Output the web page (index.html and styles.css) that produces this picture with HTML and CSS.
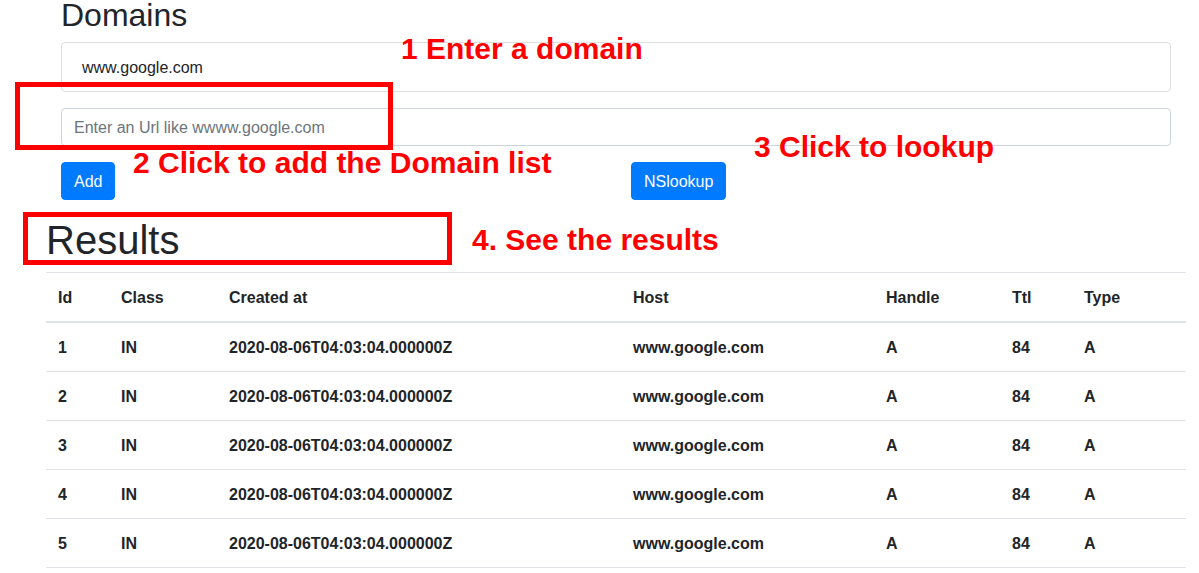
FILE: index.html
```html
<!DOCTYPE html>
<html lang="en">
<head>
<meta charset="utf-8">
<title>Domains</title>
<link rel="stylesheet" href="styles.css">
</head>
<body>
<div class="page">
  <section class="domains">
    <h2 class="domains-title">Domains</h2>
    <ul class="list-group">
      <li class="list-item">www.google.com</li>
    </ul>
    <div class="form-group">
      <input class="form-control" type="text" placeholder="Enter an Url like wwww.google.com">
    </div>
    <div class="actions">
      <div class="action-col"><button class="btn">Add</button></div>
      <div class="action-col"><button class="btn">NSlookup</button></div>
    </div>
  </section>
  <h1 class="results-title">Results</h1>
  <table class="results">
    <colgroup>
      <col class="c-id"><col class="c-class"><col class="c-created"><col class="c-host"><col class="c-handle"><col class="c-ttl"><col class="c-type">
    </colgroup>
    <thead>
      <tr><th>Id</th><th>Class</th><th>Created at</th><th>Host</th><th>Handle</th><th>Ttl</th><th>Type</th></tr>
    </thead>
    <tbody>
      <tr><td>1</td><td>IN</td><td>2020-08-06T04:03:04.000000Z</td><td>www.google.com</td><td>A</td><td>84</td><td>A</td></tr>
      <tr><td>2</td><td>IN</td><td>2020-08-06T04:03:04.000000Z</td><td>www.google.com</td><td>A</td><td>84</td><td>A</td></tr>
      <tr><td>3</td><td>IN</td><td>2020-08-06T04:03:04.000000Z</td><td>www.google.com</td><td>A</td><td>84</td><td>A</td></tr>
      <tr><td>4</td><td>IN</td><td>2020-08-06T04:03:04.000000Z</td><td>www.google.com</td><td>A</td><td>84</td><td>A</td></tr>
      <tr><td>5</td><td>IN</td><td>2020-08-06T04:03:04.000000Z</td><td>www.google.com</td><td>A</td><td>84</td><td>A</td></tr>
    </tbody>
  </table>
</div>

<div class="mark mark-input"></div>
<div class="mark mark-results"></div>
<div class="note note-1">1 Enter a domain</div>
<div class="note note-2">2 Click to add the Domain list</div>
<div class="note note-3">3 Click to lookup</div>
<div class="note note-4">4. See the results</div>
</body>
</html>
```
FILE: styles.css
```css
* { box-sizing: border-box; }

html, body {
  margin: 0;
  padding: 0;
  background: #fff;
}

body {
  font-family: "Liberation Sans", Arial, sans-serif;
  font-size: 16px;
  line-height: 1.5;
  color: #212529;
  overflow: hidden;
}

.page {
  width: 1140px;
  margin-left: 46px;
}

.domains {
  padding: 0 15px;
}

.domains-title {
  margin: -4px 0 8px;
  font-size: 32px;
  font-weight: 400;
  line-height: 1.2;
}

.list-group {
  list-style: none;
  margin: 0 0 16px;
  padding: 0;
}

.list-item {
  padding: 13px 20px 11px;
  border: 1px solid rgba(0, 0, 0, 0.125);
  border-radius: 4px;
  line-height: 24px;
}

.form-group {
  margin-bottom: 16px;
}

.form-control {
  display: block;
  width: 100%;
  height: 38px;
  padding: 7px 12px 5px;
  font-family: inherit;
  font-size: 16px;
  line-height: 24px;
  color: #495057;
  background: #fff;
  border: 1px solid #ced4da;
  border-radius: 4px;
  outline: none;
}

.form-control::placeholder {
  color: #6c757d;
  opacity: 1;
}

.actions {
  display: grid;
  grid-template-columns: 1fr 1fr;
  column-gap: 30px;
}

.btn {
  display: inline-block;
  height: 38px;
  padding: 7px 12px 5px;
  font-family: inherit;
  font-size: 16px;
  line-height: 24px;
  color: #fff;
  background: #007bff;
  border: 1px solid #007bff;
  border-radius: 4px;
}

.results-title {
  margin: 16px 0 8px;
  font-size: 40px;
  font-weight: 400;
  line-height: 1.2;
}

.results {
  width: 1140px;
  table-layout: fixed;
  border-collapse: collapse;
}

.c-id { width: 63px; }
.c-class { width: 108px; }
.c-created { width: 404px; }
.c-host { width: 253px; }
.c-handle { width: 126px; }
.c-ttl { width: 72px; }
.c-type { width: 114px; }

.results th,
.results td {
  padding: 13px 12px 11px;
  text-align: left;
  font-weight: 700;
  line-height: 24px;
  border-top: 1px solid #dee2e6;
  white-space: nowrap;
}

.results thead th {
  border-bottom: 2px solid #dee2e6;
}

.results tbody tr:last-child td {
  border-bottom: 1px solid #dee2e6;
}

.mark {
  position: absolute;
  border: 5px solid #ff0000;
}

.mark-input {
  left: 15px;
  top: 82px;
  width: 378px;
  height: 68px;
}

.mark-results {
  left: 23px;
  top: 212px;
  width: 429px;
  height: 53px;
}

.note {
  position: absolute;
  font-family: "Liberation Sans", Arial, sans-serif;
  font-size: 30px;
  font-weight: 700;
  line-height: 30px;
  color: #ff0000;
  white-space: nowrap;
}

.note-1 { left: 401px; top: 34px; }
.note-2 { left: 133px; top: 148px; }
.note-3 { left: 754px; top: 132px; }
.note-4 { left: 472px; top: 225px; }
```
